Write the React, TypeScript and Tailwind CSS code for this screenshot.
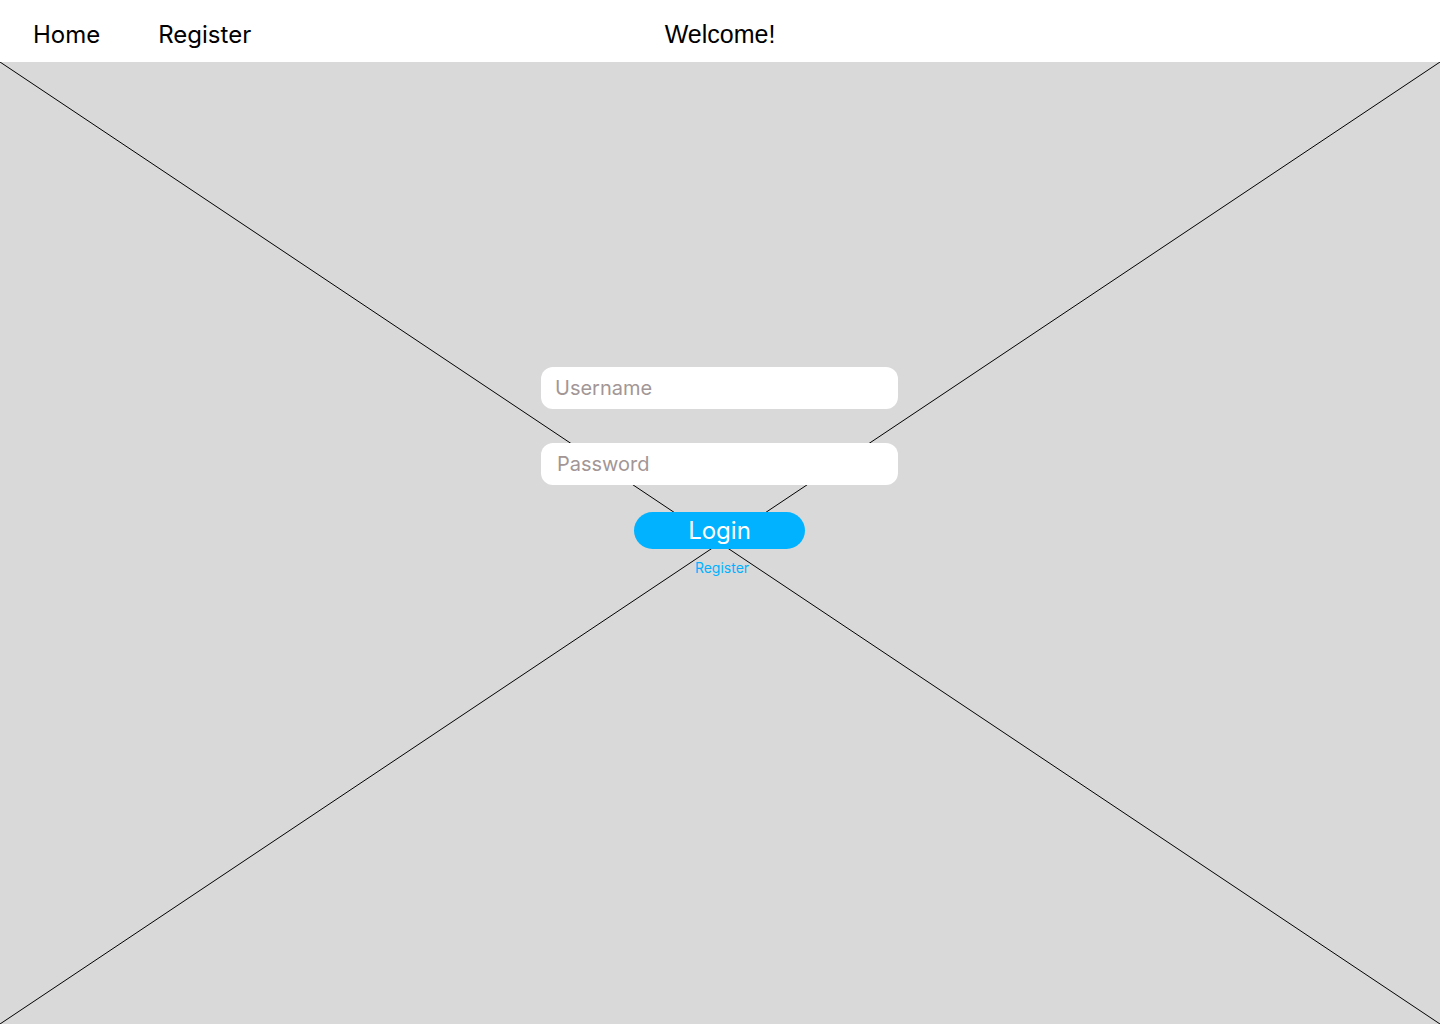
import React from 'react';

const inter = { fontFamily: 'Inter, "Noto Sans", sans-serif' };

export default function App() {
  return (
    <div className="w-[1440px] h-[1024px] flex flex-col bg-white" style={inter}>
      <header className="h-[62px] shrink-0 relative flex items-center pt-[8px] bg-white text-black">
        <nav className="flex items-center pl-[33px] gap-[58px] text-[24px]">
          <a href="#" className="text-black">Home</a>
          <a href="#" className="text-black">Register</a>
        </nav>
        <div
          className="absolute left-0 right-0 top-[8px] bottom-0 flex items-center justify-center text-[25px] text-black pointer-events-none"
          style={{ fontFamily: '"Liberation Sans", Arial, sans-serif' }}
        >
          Welcome!
        </div>
      </header>

      <main className="relative flex-1 bg-[#d9d9d9] overflow-hidden">
        {/* placeholder image cross */}
        <svg className="absolute inset-0 w-full h-full" viewBox="0 0 1440 962" preserveAspectRatio="none">
          <line x1="0" y1="0" x2="1440" y2="962" stroke="#000" strokeWidth="1" vectorEffect="non-scaling-stroke" />
          <line x1="1440" y1="0" x2="0" y2="962" stroke="#000" strokeWidth="1" vectorEffect="non-scaling-stroke" />
        </svg>

        <form className="relative flex flex-col items-center pt-[305px] pr-[1px]" onSubmit={(e) => e.preventDefault()}>
          <input
            type="text"
            placeholder="Username"
            className="w-[357px] h-[42px] rounded-[12px] bg-white px-[14px] text-[20px] text-black outline-none placeholder:text-[#a29696]"
          />
          <input
            type="password"
            placeholder="Password"
            className="mt-[34px] w-[357px] h-[42px] rounded-[12px] bg-white px-[16px] text-[20px] text-black outline-none placeholder:text-[#a29696]"
          />
          <button
            type="submit"
            className="mt-[27px] w-[171px] h-[37px] rounded-full bg-[#00b2ff] text-white text-[24px] leading-none flex items-center justify-center"
          >
            Login
          </button>
          <a href="#" className="mt-[10px] ml-[5px] text-[14px] leading-[17px] text-[#00b2ff]">Register</a>
        </form>
      </main>
    </div>
  );
}
